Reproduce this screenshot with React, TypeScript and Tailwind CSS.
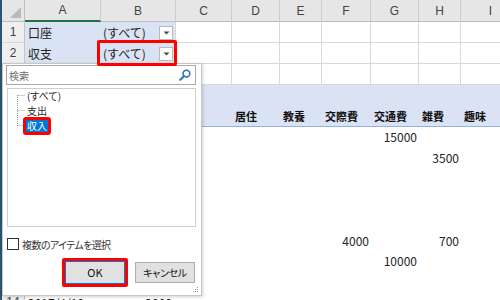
import clsx from "clsx";

const colW = [
  "w-[76px]",
  "w-[75px]",
  "w-[56px]",
  "w-[48px]",
  "w-[42px]",
  "w-[49px]",
  "w-[48px]",
  "w-[42px]",
  "w-[60px]",
];
const letters = ["A", "B", "C", "D", "E", "F", "G", "H", "I"];

const pivotHeads = ["", "", "", "居住", "教養", "交際費", "交通費", "雑費", "趣味"];

// pivot data rows 6..13, values by column index
const dataRows: Record<number, string>[] = [
  { 6: "15000" },
  { 7: "3500" },
  {},
  {},
  {},
  { 5: "4000", 7: "700" },
  { 6: "10000" },
  {},
];

function DropButton() {
  return (
    <div className="ml-auto mr-[2px] flex h-[14px] w-[14px] shrink-0 items-center justify-center border border-[#b9b9b9] bg-white">
      <svg width="7" height="4" viewBox="0 0 7 4">
        <path d="M0.5 0.5h6L3.5 3.5z" fill="#4a4a4a" />
      </svg>
    </div>
  );
}

function RowHead({ n, className }: { n?: string; className?: string }) {
  return (
    <div
      className={clsx(
        "flex w-[23px] shrink-0 items-center justify-center border-r border-b border-r-[#c4c4c4] border-b-[#d6d6d6] bg-[#efefef] font-['Liberation_Sans',sans-serif] text-[12px] text-[#444]",
        className,
      )}
    >
      {n}
    </div>
  );
}

function TopRow({ n, label }: { n?: string; label?: string }) {
  const filled = !!label;
  return (
    <div className="flex h-[21px]">
      <RowHead n={n} />
      <div
        className={clsx(
          colW[0],
          "flex shrink-0 items-center pl-[3px]",
          filled ? "bg-[#dae3f3]" : "border-r border-b border-[#d9d9d9]",
        )}
      >
        {label}
      </div>
      <div
        className={clsx(
          colW[1],
          "flex shrink-0 items-center pl-[2px]",
          filled ? "border-r border-r-[#d9d9d9] bg-[#dae3f3]" : "border-r border-b border-[#d9d9d9]",
        )}
      >
        {filled && (
          <>
            <span>(すべて)</span>
            <DropButton />
          </>
        )}
      </div>
      {colW.slice(2).map((w, i) => (
        <div key={i} className={clsx(w, "shrink-0 border-r border-b border-[#d9d9d9]")} />
      ))}
    </div>
  );
}

function DataRow({ cells }: { cells: Record<number, string> }) {
  return (
    <div className="flex h-[20.7px]">
      <RowHead />
      {colW.map((w, i) => (
        <div key={i} className={clsx(w, "flex shrink-0 items-center justify-end pr-[2px]")}>
          {cells[i]}
        </div>
      ))}
    </div>
  );
}

function FilterPanel() {
  return (
    <div className="absolute left-[2px] top-[63px] z-10 flex h-[233px] w-[200px] flex-col border border-[#c6c6c6] bg-white text-[10px] text-[#1f1f1f] shadow-[1px_1px_3px_rgba(0,0,0,0.18)] [font-feature-settings:'palt']">
      <div className="ml-[3px] mt-[1px] flex h-[20px] w-[190px] items-center justify-between border border-[#a9a9a9] pl-[2px] pr-[4px]">
        <span className="text-[#6b6b6b]">検索</span>
        <svg width="12" height="12" viewBox="0 0 12 12">
          <circle cx="7.4" cy="4.6" r="3.4" fill="none" stroke="#2f6fb6" strokeWidth="1.6" />
          <path d="M5 7 1.3 10.7" stroke="#2f6fb6" strokeWidth="2" strokeLinecap="round" />
        </svg>
      </div>

      <div className="relative ml-[4px] mt-[3px] h-[139px] w-[189px] border border-[#cfcfcf]">
        <svg className="absolute left-[9px] top-0" width="10" height="40" viewBox="0 0 10 40">
          <g stroke="#9a9a9a" strokeWidth="1" strokeDasharray="1 1" fill="none">
            <path d="M0.5 6v31" />
            <path d="M0.5 6.5h8M0.5 21.5h8M0.5 36.5h8" />
          </g>
        </svg>
        <div className="-mt-[1px] flex flex-col pl-[19px]">
          <div className="flex h-[15px] items-center">(すべて)</div>
          <div className="flex h-[15px] items-center">支出</div>
          <div className="flex h-[15px] items-center">
            <span className="relative -ml-[1px] h-[12px] bg-[#0078d7] px-[1px] leading-[12px] text-white">
              収入
              <span className="absolute -inset-[3px] rounded-[3px] border-[3px] border-[#ff0000]" />
            </span>
          </div>
        </div>
      </div>

      <div className="ml-[4px] mt-[11px] flex h-[12px] items-center gap-[3px] text-[#333]">
        <div className="h-[12px] w-[12px] border border-[#333] bg-white" />
        <span className="tracking-[-0.6px]">複数のアイテムを選択</span>
      </div>

      <div className="mt-[11px] flex items-center justify-end gap-[10px] pr-[6px] text-[11px] text-[#111]">
        <div className="relative flex h-[23px] w-[60px] items-center justify-center border border-[#0078d7] bg-[#e1e1e1]">
          OK
          <span className="absolute -inset-[4px] rounded-[2px] border-[3px] border-[#ff0000]" />
        </div>
        <div className="flex h-[21px] w-[60px] items-center justify-center border border-[#adadad] bg-[#e1e1e1] text-[10px] tracking-[-0.3px]">
          キャンセル
        </div>
      </div>

      <svg className="absolute bottom-[2px] right-[2px]" width="6" height="6" viewBox="0 0 6 6">
        <g fill="#9a9a9a">
          <rect x="4" y="0" width="1" height="1" />
          <rect x="2" y="2" width="1" height="1" />
          <rect x="4" y="2" width="1" height="1" />
          <rect x="0" y="4" width="1" height="1" />
          <rect x="2" y="4" width="1" height="1" />
          <rect x="4" y="4" width="1" height="1" />
        </g>
      </svg>
    </div>
  );
}

export default function App() {
  return (
    <div className="relative h-[300px] w-[500px] overflow-hidden bg-white font-['Noto_Sans_CJK_JP',sans-serif] text-[12px] text-[#222]">
      <div className="flex">
        <div className="w-[2px] shrink-0 bg-[#2e5473]" />
        <div className="flex flex-col">
          {/* column headers */}
          <div className="flex h-[22px] bg-[#e6e6e6] font-['Liberation_Sans',sans-serif] text-[12px] text-[#444]">
            <div className="relative w-[23px] shrink-0 border-r border-b border-[#bdbdbd]">
              <svg className="absolute bottom-[3px] right-[3px]" width="11" height="11" viewBox="0 0 11 11">
                <path d="M11 0v11H0z" fill="#b9b9b9" />
              </svg>
            </div>
            {letters.map((l, i) => (
              <div
                key={l}
                className={clsx(
                  colW[i],
                  "flex shrink-0 items-center justify-center border-r border-r-[#cdcdcd]",
                  i === 0 ? "border-b-2 border-b-[#217346]" : "border-b border-b-[#bdbdbd]",
                )}
              >
                {l}
              </div>
            ))}
          </div>

          <TopRow n="1" label="口座" />
          <TopRow n="2" label="収支" />
          <TopRow />

          {/* pivot header band */}
          <div className="flex h-[21px] bg-[#dae2f3]">
            <RowHead />
          </div>
          <div className="flex h-[21px] border-b border-[#8eb4e3] bg-[#dae2f3] text-[11px] font-bold text-[#111]">
            <RowHead />
            {colW.map((w, i) => (
              <div key={i} className={clsx(w, "flex shrink-0 items-center pl-[3px]")}>
                {pivotHeads[i]}
              </div>
            ))}
          </div>

          {dataRows.map((cells, i) => (
            <DataRow key={i} cells={cells} />
          ))}

          <div className="flex h-[20.7px]">
            <RowHead n="14" />
            <div className={clsx(colW[0], "flex shrink-0 items-center pl-[3px]")}>2017/4/10</div>
            <div className={clsx(colW[1], "flex shrink-0 items-center justify-end pr-[4px]")}>2000</div>
          </div>
        </div>
      </div>

      <FilterPanel />

      <div className="absolute left-[97px] top-[40px] z-20 h-[26px] w-[80px] rounded-[2px] border-[3px] border-[#ff0000]" />
    </div>
  );
}
